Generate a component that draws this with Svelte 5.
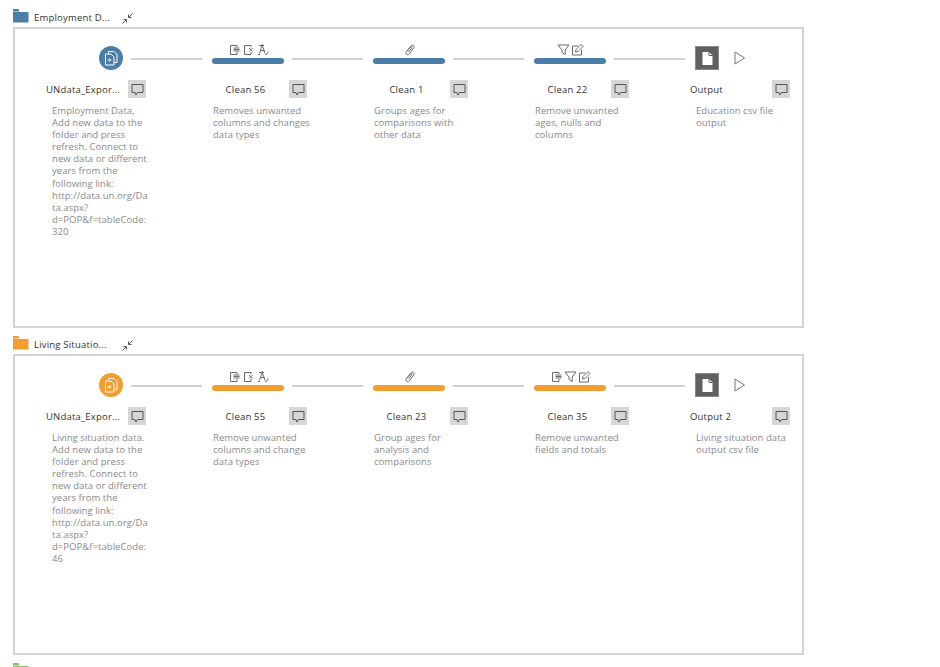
<script>
	const groups = [
		{
			name: 'Employment D...',
			color: '#4a7da8',
			steps: [
				{
					kind: 'input',
					title: 'UNdata_Expor...',
					note: 'Employment Data, Add new data to the folder and press refresh. Connect to new data or different years from the following link: http://data.un.org/Data.aspx?d=POP&f=tableCode:320'
				},
				{ kind: 'clean', title: 'Clean 56', icons: ['keep', 'remove', 'rename'], note: 'Removes unwanted columns and changes data types' },
				{ kind: 'clean', title: 'Clean 1', icons: ['clip'], note: 'Groups ages for comparisons with other data' },
				{ kind: 'clean', title: 'Clean 22', icons: ['filter', 'edit'], note: 'Remove unwanted ages, nulls and columns' },
				{ kind: 'output', title: 'Output', note: 'Education csv file output' }
			]
		},
		{
			name: 'Living Situatio...',
			color: '#f29d2e',
			steps: [
				{
					kind: 'input',
					title: 'UNdata_Expor...',
					note: 'Living situation data. Add new data to the folder and press refresh. Connect to new data or different years from the following link: http://data.un.org/Data.aspx?d=POP&f=tableCode:46'
				},
				{ kind: 'clean', title: 'Clean 55', icons: ['keep', 'remove', 'rename'], note: 'Remove unwanted columns and change data types' },
				{ kind: 'clean', title: 'Clean 23', icons: ['clip'], note: 'Group ages for analysis and comparisons' },
				{ kind: 'clean', title: 'Clean 35', icons: ['keep', 'filter', 'edit'], note: 'Remove unwanted fields and totals' },
				{ kind: 'output', title: 'Output 2', note: 'Living situation data output csv file' }
			]
		}
	];
</script>

{#snippet folder(color)}
	<svg class="folder" width="16" height="14" viewBox="0 0 16 14">
		<path d="M0 0h5.500l1 2.500H0z" fill={color} />
		<path d="M0 3h15.500v10.500H0z" fill={color} />
	</svg>
{/snippet}

{#snippet toolIcon(name)}
	<svg width="13" height="13" viewBox="0 0 13 13" fill="none" stroke="#6a6a6a" stroke-width="1">
		{#if name === 'keep'}
			<path d="M9 4V2.500H2.500v9H9V9" />
			<path d="M5.500 5h6M5.500 6.500h6M5.500 8h6" />
		{:else if name === 'remove'}
			<path d="M9 4V2.500H2.500v9H9V9" />
			<path d="M7 5l3.500 3.500M10.500 5 7 8.500" />
		{:else if name === 'rename'}
			<path d="M6.500 1 3.500 10.500M6.500 3 9 10.500M4.500 7.500h4" />
			<path d="M3 2.500h5M12 8.500c0 2-1 3-3 3M2 11.500h2" />
		{:else if name === 'clip'}
			<path d="M4 8 8.200 2.800c1.300-1.600 3.800-.2 2.700 1.900L6.300 11c-1.400 1.800-4.300.2-3.100-2L7.500 3.800c.7-.8 1.800 0 1.300 1L5.500 9" />
		{:else if name === 'filter'}
			<path d="M1 2h11L8.200 7v4.500L5 9.500V7z" />
		{:else if name === 'edit'}
			<path d="M7 3H1.500v9h9V7" />
			<path d="M4.500 9 5 6.500 10 1.500l2 2L7 8.500z" />
		{/if}
	</svg>
{/snippet}

<div class="page">
	{#each groups as group}
		<section class="group">
			<header class="group-head">
				{@render folder(group.color)}
				<span class="group-name">{group.name}</span>
				<svg class="collapse" width="11" height="11" viewBox="0 0 11 11" fill="none" stroke="#555" stroke-width="1">
					<path d="M.5 10.500 4 7M1.500 6.500h3v3" />
					<path d="M10.500.5 7 4M6.500 1.500v3h3" />
				</svg>
			</header>
			<div class="frame">
				<div class="steps">
					{#each group.steps as step, i}
						<div class="step">
							<div class="track">
								<div class="slot {step.kind}">
									{#if step.kind === 'input'}
										<span class="source" style="background: {group.color}">
											<svg width="17" height="17" viewBox="0 0 17 17" fill="none" stroke="#fff" stroke-width="1">
												<path d="M5.500 3.500V1.500h5.500l3 3v8h-3" />
												<path d="M2.500 4h5.500l3 3v8H2.500z" />
												<path d="M4.500 10h3M6.500 8.500 8 10l-1.500 1.500" />
											</svg>
										</span>
									{:else if step.kind === 'clean'}
										<div class="tools">
											{#each step.icons as icon}
												{@render toolIcon(icon)}
											{/each}
										</div>
										<span class="bar" style="background: {group.color}"></span>
									{:else}
										<span class="target">
											<svg width="13" height="15" viewBox="0 0 13 15">
												<path d="M1.500 1H8l3.500 3.500V14h-10z" fill="#fff" />
												<path d="M8 1v3.500h3.500" fill="none" stroke="#606060" />
											</svg>
										</span>
										<svg class="play" width="12" height="14" viewBox="0 0 12 14" fill="none" stroke="#777" stroke-width="1">
											<path d="M1 1 10.500 7 1 13z" />
										</svg>
									{/if}
								</div>
								{#if i < group.steps.length - 1}
									<span class="link"></span>
								{/if}
							</div>
							<div class="title-row">
								<span class="title {step.kind}">{step.title}</span>
								<button class="comment" aria-label="Comment">
									<svg width="13" height="13" viewBox="0 0 13 13" fill="none" stroke="#555" stroke-width="1">
										<path d="M1 1.500h11v8H6.500L5 12 4 9.500H1z" />
									</svg>
								</button>
							</div>
							<p class="note">{step.note}</p>
						</div>
					{/each}
				</div>
			</div>
		</section>
	{/each}
	<section class="group">
		<header class="group-head">
			{@render folder('#8cc063')}
		</header>
	</section>
</div>

<style>
	:global(body) {
		background: #fff;
	}

	.page {
		height: 667px;
		overflow: hidden;
		padding: 9px 0 0 13px;
		box-sizing: border-box;
		font-family: "Open Sans", sans-serif;
	}

	.group {
		width: 791px;
		margin-bottom: 8px;
	}

	.group-head {
		height: 18px;
		display: flex;
		align-items: flex-start;
	}

	.folder {
		flex: none;
	}

	.group-name {
		margin-left: 5px;
		width: 84px;
		font-size: 9.500px;
		letter-spacing: 0.2px;
		line-height: 17px;
		color: #333;
		white-space: nowrap;
	}

	.collapse {
		margin: 4px 0 0 4px;
	}

	.frame {
		height: 301px;
		box-sizing: border-box;
		border: 2px solid #d4d4d4;
		padding: 0 0 0 30px;
	}

	.steps {
		display: grid;
		grid-template-columns: repeat(5, 161px);
	}

	.track {
		height: 41px;
		display: flex;
		align-items: flex-end;
		padding-left: 6px;
	}

	.slot {
		width: 72px;
		flex: none;
		display: flex;
	}

	.slot.input {
		justify-content: flex-end;
	}

	.slot.clean {
		flex-direction: column;
		align-items: center;
	}

	.slot.output {
		align-items: center;
		gap: 15px;
	}

	.source {
		width: 24px;
		height: 24px;
		border-radius: 50%;
		display: flex;
		align-items: center;
		justify-content: center;
	}

	.tools {
		display: flex;
		gap: 1px;
		margin-bottom: 2px;
	}

	.tools svg {
		flex: none;
	}

	.bar {
		width: 72px;
		height: 6px;
		border-radius: 3px;
		margin-bottom: 6px;
	}

	.target {
		width: 24px;
		height: 24px;
		background: #606060;
		border: 1px solid #888;
		box-sizing: border-box;
		display: flex;
		align-items: center;
		justify-content: center;
	}

	.link {
		width: 71px;
		height: 2px;
		margin: 0 0 10px 8px;
		background: #d0d0d0;
		flex: none;
	}

	.title-row {
		display: flex;
		align-items: center;
		height: 18px;
		margin-top: 10px;
	}

	.title {
		width: 76px;
		margin-right: 7px;
		box-sizing: border-box;
		font-size: 9.500px;
		letter-spacing: 0.2px;
		color: #333;
		text-align: center;
		white-space: nowrap;
	}

	.title.clean {
		padding-left: 3px;
	}

	.title.output {
		text-align: left;
		padding-left: 1px;
	}

	.comment {
		width: 18px;
		height: 18px;
		padding: 0;
		border: 0;
		background: #d6d6d6;
		display: flex;
		align-items: center;
		justify-content: center;
	}

	.note {
		margin: 7px 0 0 7px;
		width: 98px;
		font-size: 9.500px;
		letter-spacing: 0.05px;
		line-height: 12.100px;
		color: #8a8a8a;
		overflow-wrap: anywhere;
	}
</style>
